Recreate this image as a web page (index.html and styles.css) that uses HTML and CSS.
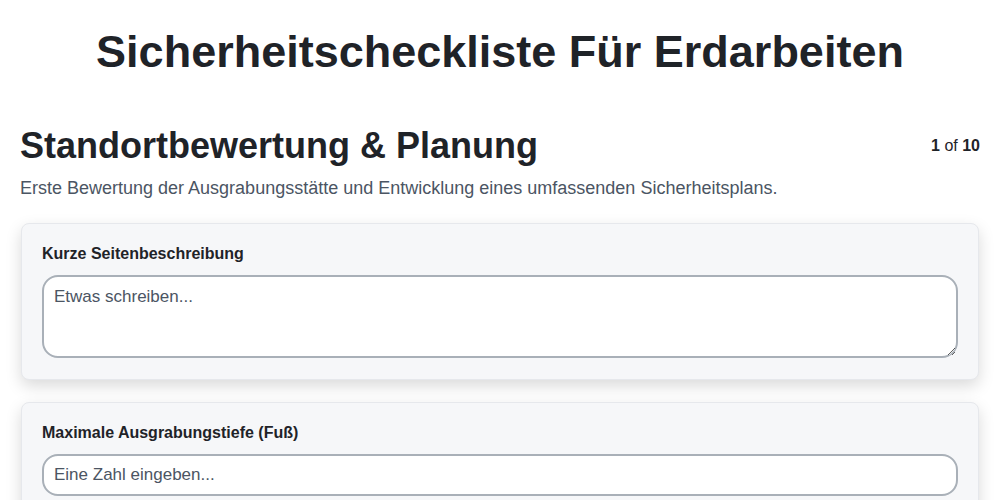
FILE: index.html
```html
<!DOCTYPE html>
<html lang="de">
<head>
  <meta charset="UTF-8">
  <title>Sicherheitscheckliste Für Erdarbeiten</title>
  <meta name="viewport" content="width=device-width, initial-scale=1.0">
  <link rel="stylesheet" href="styles.css">
</head>
<body>
  <div class="wrapper">
    <h1 class="page-title">Sicherheitscheckliste Für Erdarbeiten</h1>

    <section class="step">
      <div class="step-head">
        <h2>Standortbewertung &amp; Planung</h2>
        <div class="step-count"><b>1</b> of <b>10</b></div>
      </div>
      <p class="step-desc">Erste Bewertung der Ausgrabungsstätte und Entwicklung eines umfassenden Sicherheitsplans.</p>

      <div class="card">
        <label for="siteDesc">Kurze Seitenbeschreibung</label>
        <textarea id="siteDesc" placeholder="Etwas schreiben..."></textarea>
      </div>

      <div class="card">
        <label for="maxDepth">Maximale Ausgrabungstiefe (Fuß)</label>
        <input type="number" id="maxDepth" placeholder="Eine Zahl eingeben...">
      </div>
    </section>
  </div>
</body>
</html>
```

FILE: styles.css
```css
:root {
  --text: #1f2328;
  --muted: #4b5563;
  --card: #f6f7f9;
  --border: #e6e8ec;
  --field-border: #a9b0b8;
}

body {
  margin: 0;
  font-family: 'Liberation Sans', Arial, sans-serif;
  color: var(--text);
  background: #fff;
}

.wrapper {
  padding: 0 20px;
}

.page-title {
  margin: 0;
  padding: 26px 0 0;
  text-align: center;
  font-size: 45px;
  line-height: 52px;
  font-weight: 700;
}

.step {
  margin-top: 46px;
}

.step-head {
  display: flex;
  justify-content: space-between;
  align-items: flex-start;
}

.step-head h2 {
  margin: 0;
  font-size: 36px;
  line-height: 44px;
  font-weight: 700;
}

.step-count {
  font-size: 16px;
  padding-top: 13px;
}

.step-desc {
  margin: 7px 0 0;
  font-size: 18px;
  line-height: 26px;
  color: var(--muted);
}

.card {
  margin: 22px 1px 0;
  background: var(--card);
  border: 1px solid var(--border);
  border-radius: 8px;
  box-shadow: 0 6px 16px rgba(0, 0, 0, .15);
  padding: 20px 20px 21px;
  display: flex;
  flex-direction: column;
  gap: 11px;
}

.card label {
  font-size: 16px;
  line-height: 20px;
  font-weight: 700;
}

.card textarea,
.card input {
  box-sizing: border-box;
  width: 100%;
  font-family: inherit;
  font-size: 17px;
  color: var(--text);
  background: #fff;
  border: 2px solid var(--field-border);
  border-radius: 16px;
  padding: 10px 10px;
  outline: none;
}

.card textarea {
  height: 83px;
  resize: vertical;
}

.card input {
  height: 42px;
  -moz-appearance: textfield;
}

.card input::-webkit-outer-spin-button,
.card input::-webkit-inner-spin-button {
  -webkit-appearance: none;
  margin: 0;
}

.card textarea::placeholder,
.card input::placeholder {
  color: #4b5563;
}
```
